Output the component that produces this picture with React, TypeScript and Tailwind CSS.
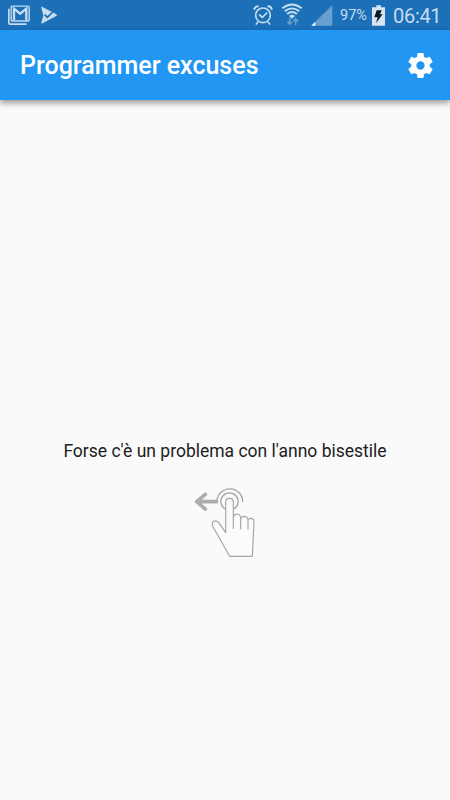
const MailIcon = () => (
  <svg className="w-[22px] h-[20px]" viewBox="24 14 66 60" fill="none" stroke="#c6dcef">
    <path d="M26.500 25V68Q26.500 71.500 30 71.500H80" strokeWidth="5" />
    <path d="M36 17.500H85Q87.500 17.500 87.500 20V60Q87.500 62 85 62H36Q33.500 62 33.500 60V20Q33.500 17.500 36 17.500Z" strokeWidth="4" />
    <path d="M42 60V25L60.500 40L79 25V60" strokeWidth="7" />
  </svg>
);

const PlayCheckIcon = () => (
  <svg className="w-4 h-[18px]" viewBox="124 17 48 54">
    <path d="M127 19Q125 18 125 22L131 45L125 67Q125 71 129 69L170 47Q173 45 170 42Z" fill="#c6dcef" />
    <path d="M135 43L143 51L159 35" fill="none" stroke="#1b70b8" strokeWidth="5" />
  </svg>
);

const AlarmIcon = () => (
  <svg className="w-5 h-5" viewBox="24 16 60 60" fill="none" stroke="#c6dcef" strokeLinecap="round">
    <circle cx="54" cy="47" r="22" strokeWidth="5" />
    <path d="M28 28Q30 21 38 20M70 20Q78 21 80 28" strokeWidth="6" />
    <path d="M38 68L34 73M70 68L74 73" strokeWidth="5" />
    <path d="M44 46L52 53L65 40" strokeWidth="5" />
  </svg>
);

const WifiIcon = () => (
  <svg className="w-[22px] h-[23px]" viewBox="108 8 66 69" fill="none">
    <g stroke="#c6dcef" strokeWidth="5.500">
      <path d="M112 24Q141 1 170 24" />
      <path d="M119 33Q141 15 163 33" />
      <path d="M126 41Q141 29 156 41" />
    </g>
    <path d="M132 47Q141 39 150 47L141 55Z" fill="#c6dcef" />
    <path d="M134 52V72M127 64L134 72L141 64M152 74V55M145 63L152 55L159 63" stroke="#659fd0" strokeWidth="5" />
  </svg>
);

const SignalIcon = () => (
  <svg className="w-[22px] h-[21px]" viewBox="200 13 66 63">
    <path d="M201 75L264 13V75Z" fill="#669fd0" />
    <path d="M201 75L213 63V75Z" fill="#eaf4fc" />
  </svg>
);

const BatteryIcon = () => (
  <svg className="w-[13px] h-[21px]" viewBox="109 11 39 63">
    <path d="M122 12H136V18H148V73H109V18H122Z" fill="#d4e5f3" />
    <path d="M123 27H138L133 39H141L121 65L126 48H116Z" fill="#101820" />
  </svg>
);

const SettingsIcon = () => (
  <svg className="w-[31px] h-[31px]" viewBox="0 0 24 24" fill="white">
    <path d="M19.140 12.940c.040-.300.060-.610.060-.940 0-.320-.020-.640-.070-.940l2.030-1.580c.180-.140.230-.410.120-.610l-1.920-3.320c-.120-.220-.370-.290-.590-.220l-2.390.960c-.500-.380-1.030-.700-1.620-.940l-.360-2.540c-.040-.240-.240-.410-.480-.410h-3.840c-.240 0-.430.170-.470.410l-.360 2.540c-.590.240-1.130.570-1.620.940l-2.390-.960c-.220-.080-.470 0-.590.220L2.740 8.870c-.120.210-.080.470.120.610l2.030 1.580c-.050.300-.090.630-.090.940s.020.640.070.940l-2.030 1.580c-.180.140-.230.410-.120.610l1.920 3.320c.120.220.370.290.590.220l2.390-.960c.500.380 1.030.700 1.620.940l.360 2.540c.050.240.240.410.480.410h3.840c.240 0 .440-.170.470-.410l.360-2.540c.590-.240 1.130-.560 1.620-.940l2.390.960c.220.080.470 0 .590-.220l1.920-3.320c.120-.220.070-.470-.120-.610l-2.010-1.580zM12 15.200A3.200 3.200 0 1 1 12 8.800a3.200 3.200 0 0 1 0 6.400z" />
  </svg>
);

const SwipeHint = () => (
  <svg className="w-20 h-[85px]" viewBox="0 0 240 255" fill="none" stroke="#a6a6a6" strokeLinejoin="round">
    <path d="M94 65H36M61 43L35 65L61 87" stroke="#adadad" strokeWidth="11" strokeLinecap="round" />
    <path d="M96 64A38.500 38.500 0 0 1 173 66" strokeWidth="4" />
    <path d="M120 87A26 26 0 1 1 147 87" strokeWidth="4" />
    <path
      d="M134 229L84 140Q79 129 86 124Q95 119 103 130L122 158V66Q122 55 133.500 55Q145 55 145 66V145V111Q147 102 156 102Q167 103 167 115V146V118Q168 109 178 109Q189 110 189 122V147V123Q190 114 199 115Q207 116 207 126L202 229Z"
      fill="#fbfbfb"
      strokeWidth="3.500"
    />
  </svg>
);

const StatusBar = () => (
  <div className="h-[30px] bg-[#1b70b8] flex items-center justify-between pl-2 pr-[9px] text-[#c6dcef]">
    <div className="flex items-center gap-[11px]">
      <MailIcon />
      <PlayCheckIcon />
    </div>
    <div className="flex items-center">
      <AlarmIcon />
      <div className="ml-2 mr-2 pb-px">
        <WifiIcon />
      </div>
      <SignalIcon />
      <span className="ml-[7px] w-8 pt-[2px] text-[14.500px] leading-5 whitespace-nowrap">97%</span>
      <BatteryIcon />
      <span className="ml-2 w-[48px] pt-[2px] text-[20px] leading-6 tracking-[-0.300px] whitespace-nowrap">06:41</span>
    </div>
  </div>
);

const AppBar = () => (
  <header className="h-[70px] bg-[#2196f3] flex items-center justify-between pl-5 pr-[14.500px] shadow-[0_3px_6px_rgba(0,0,0,0.4)]">
    <h1 className="pt-[2px] text-white text-[25px] font-medium">Programmer excuses</h1>
    <button aria-label="Settings">
      <SettingsIcon />
    </button>
  </header>
);

const App = () => {
  return (
    <div className="h-screen flex flex-col bg-[#fafafa] font-['Roboto',sans-serif] overflow-hidden">
      <StatusBar />
      <AppBar />
      <main className="flex-1 flex flex-col items-center pt-[336px]">
        <p className="text-[17.500px] leading-[30px] text-[#212121]">Forse c'è un problema con l'anno bisestile</p>
        <div className="mt-[14px]">
          <SwipeHint />
        </div>
      </main>
    </div>
  );
};

export default App;
